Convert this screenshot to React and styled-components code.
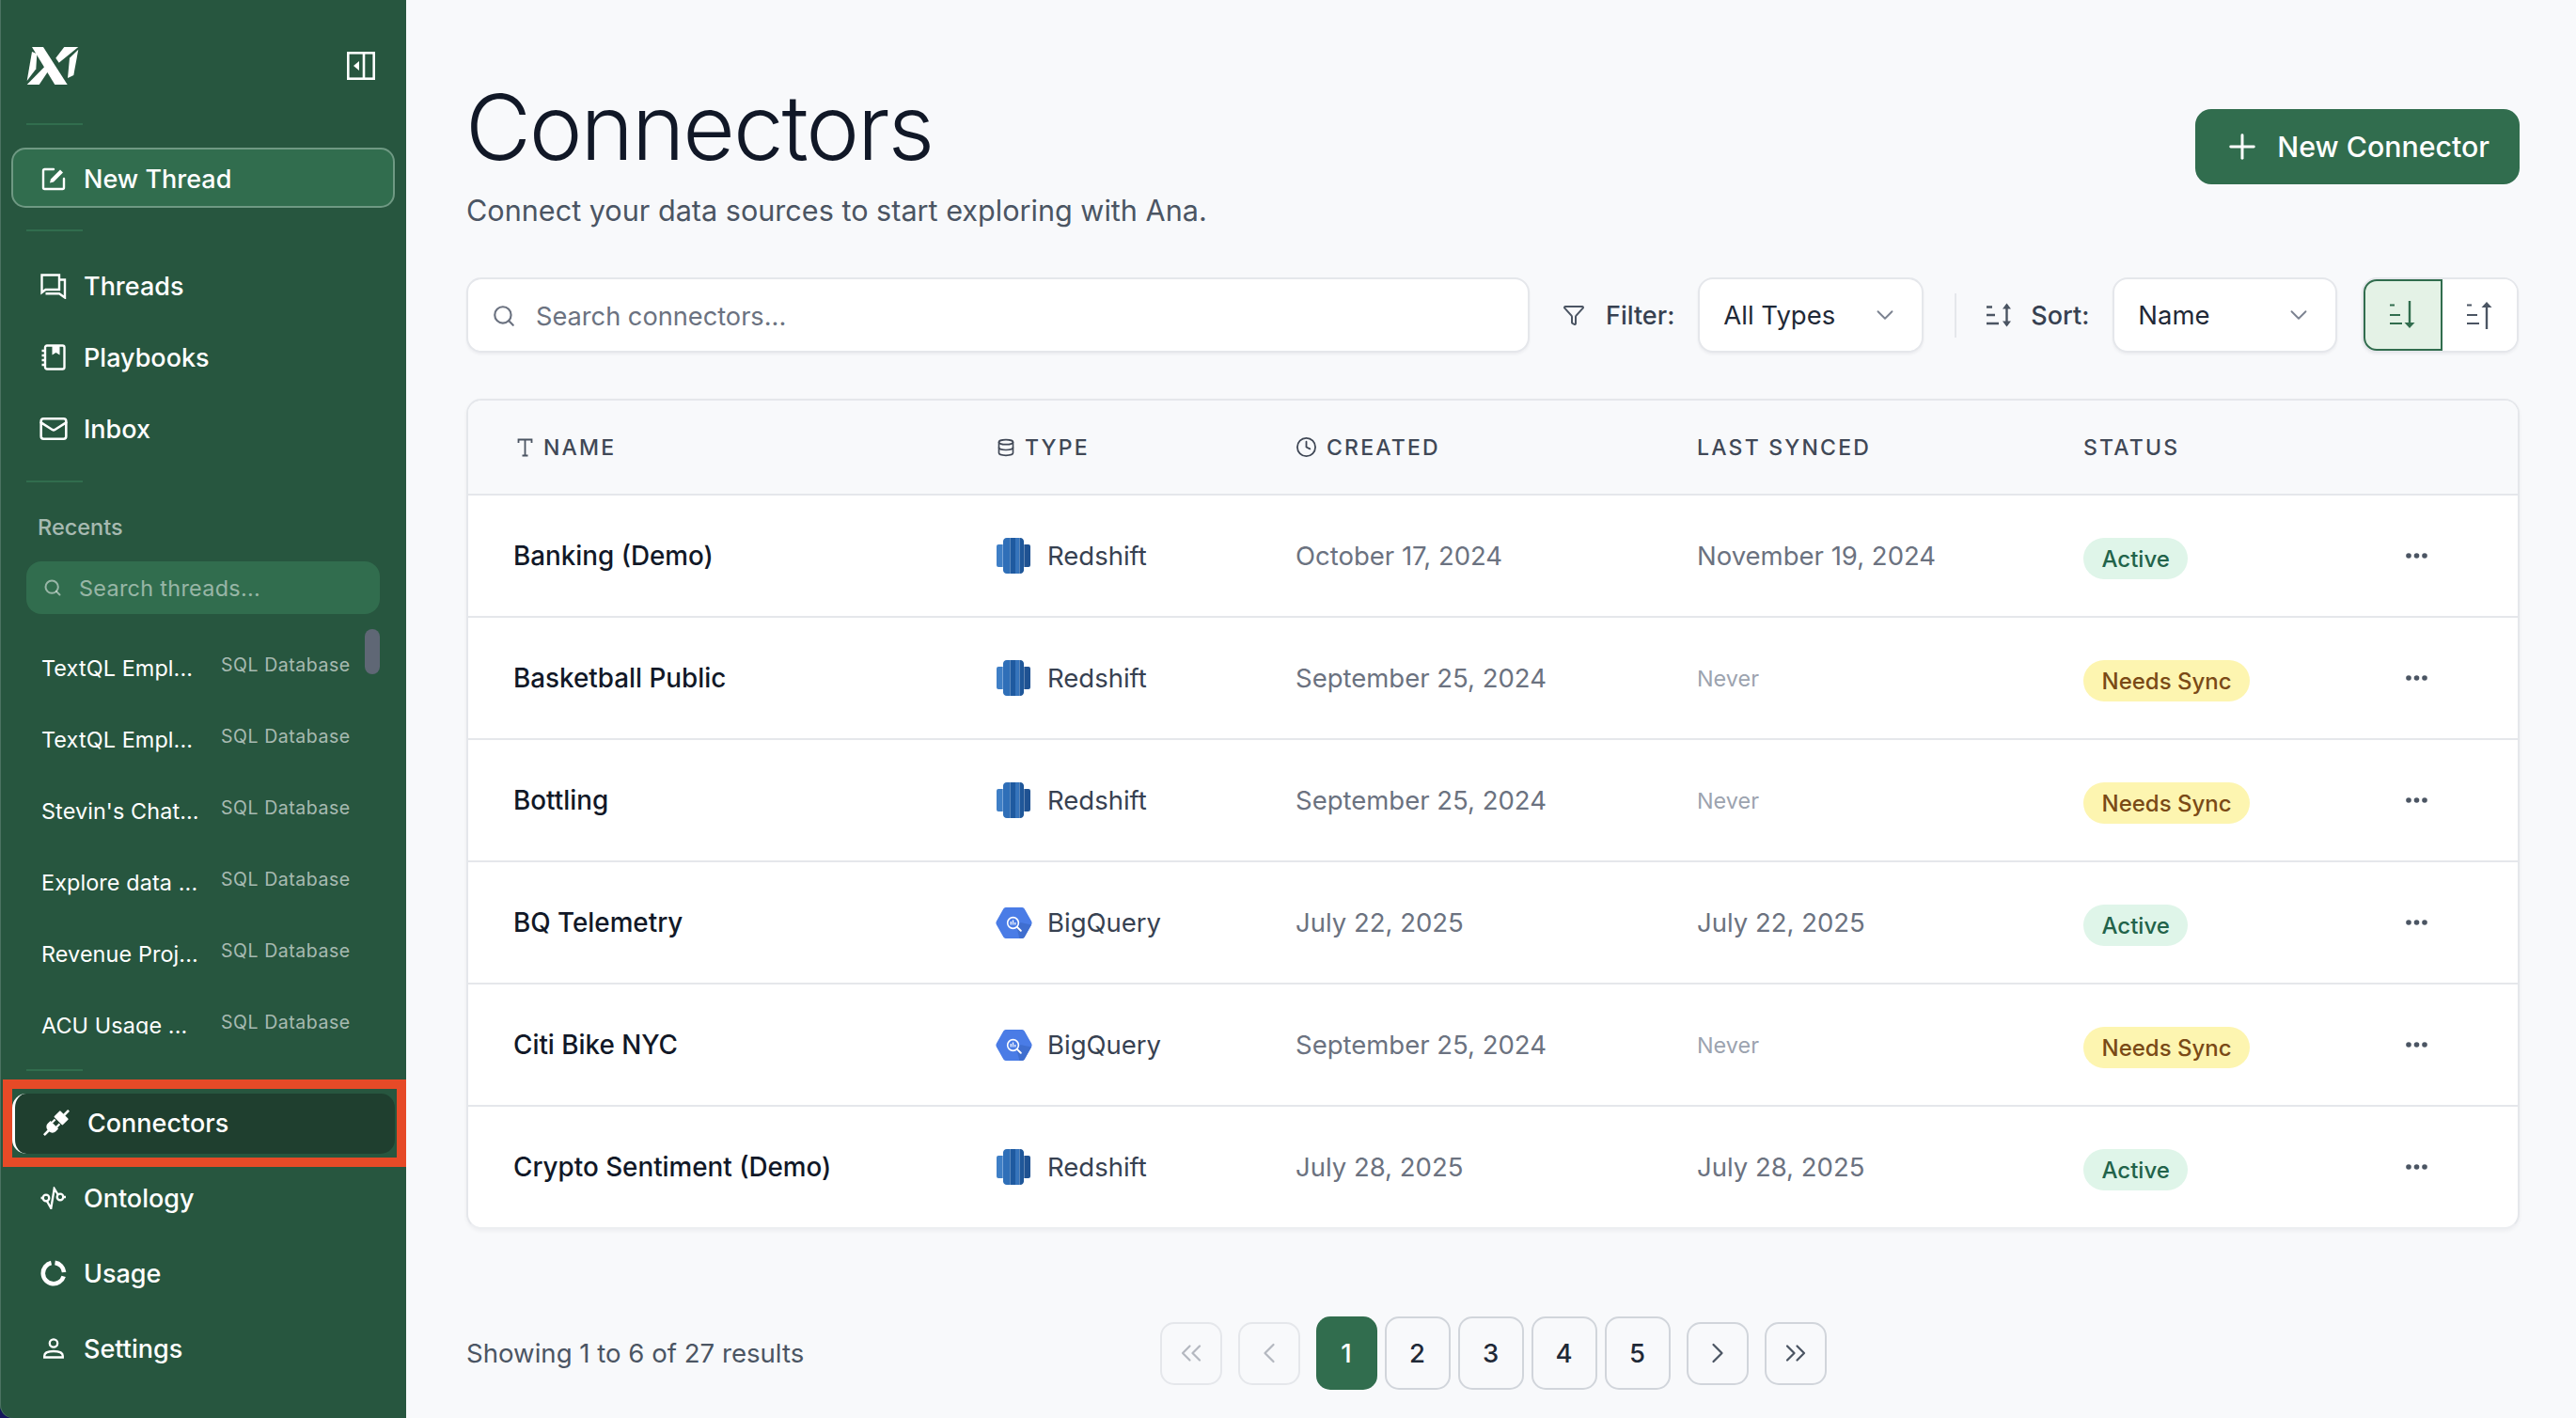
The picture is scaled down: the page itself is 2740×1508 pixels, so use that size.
import React from "react";
import styled, { createGlobalStyle } from "styled-components";
import { Search, Mail, Plus, ChevronDown, ChevronLeft, ChevronRight, ChevronsLeft, ChevronsRight, Funnel, Database, Clock } from "lucide-react";

const Global = createGlobalStyle`
  html, body { margin: 0; padding: 0; background: #14165c; }
  * { box-sizing: border-box; }
  body { font-family: Inter, "Noto Sans", sans-serif; }
`;

const Page = styled.div`
  display: flex;
  width: 2740px;
  height: 1508px;
  overflow: hidden;
  background: #f8f9fb;
`;

/* ---------- Sidebar ---------- */
const SideShell = styled.div`
  flex: 0 0 432px;
  height: 100%;
  background: #14165c;
`;
const Sidebar = styled.aside`
  display: flex;
  flex-direction: column;
  height: 100%;
  padding-top: 49px;
  border-bottom-left-radius: 14px;
  background: #27563f;
  color: #fff;
  box-shadow: inset 1px 0 0 #4c7262;
`;
const Brand = styled.div`
  display: flex;
  align-items: center;
  justify-content: space-between;
  height: 42px;
  padding: 0 33px 0 28px;
`;
const SideRule = styled.div`
  width: 60px;
  height: 2px;
  margin: ${(p) => p.$top}px 0 0 28px;
  flex: none;
  background: #316d4e;
`;
const NewThread = styled.button`
  display: flex;
  align-items: center;
  gap: 19px;
  height: 64px;
  margin: 24px 12px 0;
  padding: 2px 30px 0;
  flex: none;
  border: 2px solid rgba(255, 255, 255, 0.3);
  border-radius: 15px;
  background: #316d4e;
  color: #fff;
  font: 500 27px Inter, sans-serif;
  text-align: left;
`;
const NavGroup = styled.nav`
  display: flex;
  flex-direction: column;
  margin-top: ${(p) => p.$top}px;
`;
const NavItem = styled.div`
  display: flex;
  align-items: center;
  gap: 19px;
  height: ${(p) => p.$h}px;
  padding-left: 43px;
  font-size: 27px;
  font-weight: 500;
`;
const IconBox = styled.span`
  display: flex;
  align-items: center;
  justify-content: center;
  width: 27px;
  height: 27px;
  flex: none;
  & > svg { flex: none; }
`;
const Recents = styled.div`
  margin: 33px 0 0 40px;
  height: 30px;
  line-height: 30px;
  font-size: 23.5px;
  font-weight: 500;
  color: rgba(255, 255, 255, 0.6);
`;
const ThreadSearch = styled.div`
  display: flex;
  align-items: center;
  gap: 18px;
  height: 56px;
  margin: 21px 28px 0;
  padding: 0 18px;
  flex: none;
  border-radius: 16px;
  background: #316d4e;
  color: rgba(255, 255, 255, 0.5);
  font-size: 23.4px;
  letter-spacing: 0.3px;
`;
const ThreadList = styled.div`
  position: relative;
  height: 431px;
  margin-top: 16px;
  padding-top: 3px;
  flex: none;
  overflow: hidden;
`;
const Thumb = styled.div`
  position: absolute;
  top: 0;
  right: 28px;
  width: 16px;
  height: 48px;
  border-radius: 8px;
  background: #5f6775;
`;
const ThreadRow = styled.div`
  display: grid;
  grid-template-columns: 172px auto;
  column-gap: 19px;
  align-items: center;
  height: 76px;
  padding-left: 44px;
`;
const ThreadName = styled.span`
  white-space: nowrap;
  font-size: 23.4px;
  letter-spacing: 0.1px;
`;
const ThreadType = styled.span`
  padding-bottom: 7px;
  font-size: 19.5px;
  letter-spacing: 0.55px;
  color: rgba(255, 255, 255, 0.6);
`;
const ActiveWrap = styled.div`
  position: relative;
  height: 64px;
  margin: 24px 12px 0 13px;
  flex: none;
`;
const ActiveItem = styled.div`
  display: flex;
  align-items: center;
  gap: 20px;
  height: 100%;
  padding: 0 0 2px 30px;
  border-left: 3px solid #fff;
  border-radius: 15px;
  background: #1f3f2f;
  font-size: 27px;
  font-weight: 500;
`;
const Callout = styled.div`
  position: absolute;
  top: -15px;
  left: -10px;
  right: -12px;
  bottom: -14px;
  border: 10px solid #e64a27;
  pointer-events: none;
`;

/* ---------- Main ---------- */
const Main = styled.main`
  flex: 1;
  display: flex;
  flex-direction: column;
  min-width: 0;
  padding: 80px 60px 0 64px;
`;
const Header = styled.header`
  display: flex;
  justify-content: space-between;
  align-items: flex-start;
`;
const Title = styled.h1`
  margin: 0 0 0 -1px;
  height: 110px;
  line-height: 110px;
  font-size: 96px;
  font-weight: 300;
  letter-spacing: -2.1px;
  color: #111827;
`;
const Subtitle = styled.p`
  margin: 16px 0 0;
  line-height: 36px;
  font-size: 30.6px;
  color: #4b5563;
`;
const PrimaryButton = styled.button`
  display: flex;
  align-items: center;
  gap: 16px;
  height: 80px;
  margin-top: 36px;
  padding: 0 32px 0 29px;
  border: 0;
  border-radius: 17px;
  background: #316d4e;
  color: #fff;
  font: 500 30.3px Inter, sans-serif;
`;
const Toolbar = styled.div`
  display: flex;
  align-items: center;
  height: 80px;
  margin-top: 53px;
`;
const SearchField = styled.label`
  display: flex;
  align-items: center;
  gap: 19px;
  width: 1131px;
  height: 80px;
  padding: 2px 25px 0;
  flex: none;
  border: 2px solid #e5e7eb;
  border-radius: 16px;
  background: #fff;
  box-shadow: 0 2px 3px rgba(17, 24, 39, 0.05);
  color: #6b7280;
`;
const SearchInput = styled.input`
  flex: 1;
  min-width: 0;
  border: 0;
  outline: 0;
  background: transparent;
  font: 400 27.2px Inter, sans-serif;
  &::placeholder { color: #6b7280; opacity: 1; }
`;
const ToolLabel = styled.span`
  display: flex;
  align-items: center;
  gap: ${(p) => p.$gap}px;
  margin-left: ${(p) => p.$left}px;
  font-size: 27px;
  font-weight: 500;
  color: #374151;
  & > svg { color: #4b5563; flex: none; }
`;
const Select = styled.div`
  display: flex;
  align-items: center;
  justify-content: space-between;
  width: ${(p) => p.$w}px;
  height: 80px;
  margin-left: 25px;
  padding: 0 24px 0 25px;
  flex: none;
  border: 2px solid #e5e7eb;
  border-radius: 16px;
  background: #fff;
  box-shadow: 0 2px 3px rgba(17, 24, 39, 0.05);
  font-size: 27.5px;
  color: #1f2937;
  & > svg { color: #7b8290; }
`;
const VRule = styled.div`
  width: 2px;
  height: 47px;
  margin-left: 33px;
  flex: none;
  background: #e5e7eb;
`;
const SortToggle = styled.div`
  display: flex;
  width: 167px;
  height: 80px;
  margin-left: 26px;
  flex: none;
  border: 2px solid #e5e7eb;
  border-radius: 16px;
  background: #fff;
  box-shadow: 0 2px 3px rgba(17, 24, 39, 0.05);
`;
const SortButton = styled.div`
  display: flex;
  align-items: center;
  justify-content: center;
  flex: ${(p) => (p.$on ? "0 0 84px" : "1")};
  border: ${(p) => (p.$on ? "2px solid #316d4e" : "0")};
  border-radius: ${(p) => (p.$on ? "14px 0 0 14px" : "0 14px 14px 0")};
  background: ${(p) => (p.$on ? "#e4f2e6" : "#fff")};
  color: ${(p) => (p.$on ? "#316d4e" : "#4b5563")};
`;
const columns = "514px 318px 427px 411px 300px 1fr";
const Table = styled.section`
  margin-top: 49px;
  border: 2px solid #e5e7eb;
  border-bottom-color: #eceef1;
  border-radius: 16px;
  overflow: hidden;
  background: #fff;
  box-shadow: 0 2px 4px rgba(17, 24, 39, 0.05);
`;
const HeadRow = styled.div`
  display: grid;
  grid-template-columns: ${columns};
  align-items: center;
  height: 101px;
  border-bottom: 2px solid #e5e7eb;
  background: #f8f9fb;
`;
const HeadCell = styled.div`
  display: flex;
  align-items: center;
  gap: ${(p) => p.$gap ?? 10}px;
  padding-left: ${(p) => p.$pad ?? 48}px;
  font-size: 23px;
  font-weight: 500;
  letter-spacing: 2.2px;
  color: #404856;
`;
const Row = styled.div`
  display: grid;
  grid-template-columns: ${columns};
  align-items: center;
  height: 130px;
  border-bottom: 2px solid #e5e7eb;
  &:last-child { height: 128px; border-bottom: 0; }
`;
const Cell = styled.div`
  display: flex;
  align-items: center;
  gap: 18px;
  padding-left: 48px;
  font-size: ${(p) => p.$size || 27.5}px;
  color: ${(p) => p.$color || "#6b7280"};
  font-weight: ${(p) => p.$weight || 400};
`;
const LogoSlot = styled.span`
  display: flex;
  align-items: center;
  justify-content: center;
  width: 36px;
  height: 38px;
  flex: none;
  & > svg { flex: none; }
`;
const Never = styled.span`
  font-size: 23.4px;
  color: #9ca3af;
`;
const Badge = styled.span`
  display: inline-flex;
  align-items: center;
  height: 44px;
  margin-top: 6px;
  padding: 0 19.500px;
  border-radius: 22px;
  font-size: 24px;
  font-weight: 500;
  background: ${(p) => (p.$warn ? "#fdf5b0" : "#dff5e9")};
  color: ${(p) => (p.$warn ? "#7a4a16" : "#22634a")};
`;
const Dots = styled.div`
  display: flex;
  align-items: center;
  padding-left: 91px;
  color: #4b5563;
`;
const Footer = styled.div`
  display: grid;
  grid-template-columns: 1fr auto 1fr;
  align-items: center;
  height: 78px;
  margin-top: 93px;
`;
const Showing = styled.div`
  font-size: 27.6px;
  color: #4b5563;
`;
const Pager = styled.div`
  display: flex;
  align-items: center;
  gap: 17px;
`;
const Pages = styled.div`
  display: flex;
  align-items: center;
  gap: 8px;
`;
const NavBtn = styled.div`
  display: flex;
  align-items: center;
  justify-content: center;
  width: 66px;
  height: 67px;
  border: 2px solid ${(p) => (p.$off ? "#e5e7eb" : "#d1d5db")};
  border-radius: 15px;
  color: ${(p) => (p.$off ? "#b4b8c0" : "#4b5563")};
`;
const PageBtn = styled.div`
  display: flex;
  align-items: center;
  justify-content: center;
  width: ${(p) => (p.$on ? 65 : 70)}px;
  height: 78px;
  border: ${(p) => (p.$on ? "0" : "2px solid #d1d5db")};
  border-radius: 15px;
  background: ${(p) => (p.$on ? "#316d4e" : "transparent")};
  color: ${(p) => (p.$on ? "#fff" : "#1f2937")};
  font-size: 27.5px;
  font-weight: 500;
`;

/* ---------- Drawings ---------- */
const Logo = () => (
  <svg width="57" height="42" viewBox="0 0 57 42" fill="#fff">
    <polygon points="6,1 18,1 43.7,41 30.3,41" />
    <polygon points="55.3,1 40.3,1 31.3,12.7 34.7,17.7" />
    <polygon points="55.3,3.7 50.3,31 44,34 46,12.7" />
    <polygon points="6,6 11.3,8.3 10.3,24.3 0.7,37" />
    <polygon points="0.7,41 13.7,41 23.7,26 20.3,21" />
  </svg>
);
const Collapse = () => (
  <svg width="30" height="30" viewBox="0 0 30 30" fill="none" stroke="#fff" strokeWidth="2.6">
    <rect x="1.3" y="1.3" width="27.4" height="27.4" />
    <line x1="18" y1="1" x2="18" y2="29" />
    <polygon points="13,10 13,20 7,15" fill="#fff" stroke="none" />
  </svg>
);
const Pen = () => (
  <svg width="26" height="26" viewBox="0 0 26 26" fill="none" stroke="#fff" strokeWidth="2.4" strokeLinecap="round">
    <path d="M13 3H3.5a1.5 1.5 0 0 0-1.5 1.5v18A1.5 1.5 0 0 0 3.5 24h19a1.5 1.5 0 0 0 1.5-1.5V13" />
    <path d="M9 17.5l1-4L20 3.5l3 3L13 16.5z" fill="#fff" stroke="none" />
  </svg>
);
const Threads = () => (
  <svg width="28" height="27" viewBox="0 0 28 27" fill="none" stroke="#fff" strokeWidth="2.4">
    <path d="M1.5 1.5H20V17H5.500L1.500 20z" />
    <path d="M5.500 21.300H20L26 25.500V6.500H21" />
  </svg>
);
const Playbook = () => (
  <svg width="26" height="28" viewBox="0 0 26 28" fill="none" stroke="#fff" strokeWidth="2.4">
    <rect x="4" y="1.5" width="20.5" height="25" rx="2" />
    <path d="M11.500 1.500h8v10l-4-2.500-4 2.500z" fill="#fff" stroke="none" />
    <path d="M0.500 7h4M0.500 12h4M0.500 17h4M0.500 22h4" />
  </svg>
);
const PlugIcon = () => (
  <svg width="30" height="30" viewBox="0 0 30 30" fill="#fff" overflow="visible">
    <g transform="rotate(45 15 15)">
      <rect x="13.700" y="-3.500" width="2.600" height="7.500" />
      <rect x="8.500" y="3" width="13" height="9.500" rx="1" />
      <rect x="10.500" y="13.500" width="2.200" height="5" />
      <rect x="17.300" y="13.500" width="2.200" height="5" />
      <path d="M9 18h12v4a5 5 0 0 1-5 5h-2a5 5 0 0 1-5-5z" />
      <rect x="13.700" y="26" width="2.600" height="7.500" />
    </g>
  </svg>
);
const Ontology = () => (
  <svg width="28" height="24" viewBox="0 0 28 24" fill="none" stroke="#fff" strokeWidth="2.3">
    <circle cx="6" cy="12" r="3.300" />
    <circle cx="21" cy="11" r="3.300" />
    <path d="M0.500 12H2.700M24.300 11H27M7 15.500L11.300 23L14.700 2L18.700 8.500" />
  </svg>
);
const Usage = () => (
  <svg width="28" height="28" viewBox="0 0 28 28" fill="none" stroke="#fff" strokeWidth="4.6">
    <path d="M15.500 2.900A11.200 11.200 0 0 1 25.100 13M24.700 17.300A11.200 11.200 0 1 1 11.500 3.100" />
  </svg>
);
const Person = () => (
  <svg width="22" height="22" viewBox="0 0 22 22" fill="none" stroke="#fff" strokeWidth="2.300">
    <circle cx="11" cy="5.500" r="4.200" />
    <path d="M1.200 20.500V19c0-3 3-5 9.800-5s9.800 2 9.800 5v1.500z" />
  </svg>
);
const SortBoth = () => (
  <svg width="29" height="28" viewBox="0 0 29 28" fill="none" stroke="currentColor" strokeWidth="2.400">
    <path d="M0 5.500h6M0 14h9M0 23h13M21.500 3v22" />
    <path d="M17 7.500l4.500-6 4.500 6zM17 20.500l4.500 6 4.500-6z" fill="currentColor" stroke="none" />
  </svg>
);
const SortArrow = ({ down }) => (
  <svg width="28" height="30" viewBox="0 0 28 30" fill="none" stroke="currentColor" strokeWidth="2.400">
    <path d="M0 4.500h5M0 15h11M0 24h13" strokeWidth="2.200" />
    <path d={down ? "M21 0v26" : "M21 4v26"} />
    <path d={down ? "M15.500 23h11L21 29z" : "M15.500 7h11L21 1z"} fill="currentColor" stroke="none" />
  </svg>
);
const TypeT = () => (
  <svg width="17" height="20" viewBox="0 0 17 20" fill="none" stroke="#4b5563" strokeWidth="1.800">
    <path d="M1.500 5V1.500h14V5M8.500 1.500V18M5.500 18.500h6" />
  </svg>
);
const Redshift = () => (
  <svg width="36" height="38" viewBox="0 0 36 38">
    <path d="M6.700 7H2a2 2 0 0 0-2 2v20a2 2 0 0 0 2 2h4.700z" fill="#3f7fc6" />
    <path d="M29.300 7H34a2 2 0 0 1 2 2v20a2 2 0 0 1-2 2h-4.700z" fill="#1f5292" />
    <path d="M7 3.500A4 4 0 0 1 11 0h3.500v38H11a4 4 0 0 1-4-3.500z" fill="#2f6fb8" />
    <rect x="14.500" y="0" width="5.500" height="38" fill="#1f5aa0" />
    <rect x="20" y="0" width="4.500" height="38" fill="#3674bb" />
    <path d="M24.500 0H25a4 4 0 0 1 4 3.500v31a4 4 0 0 1-4 3.500h-0.500z" fill="#1f5799" />
  </svg>
);
const BigQuery = () => (
  <svg width="39" height="35" viewBox="0 0 40 35">
    <path d="M1 15.500L8.500 2A3 3 0 0 1 11 .500h18A3 3 0 0 1 31.500 2L39 15.500a4 4 0 0 1 0 4L31.500 33a3 3 0 0 1-2.500 1.500H11A3 3 0 0 1 8.500 33L1 19.500a4 4 0 0 1 0-4z" fill="#4a7ce6" />
    <path d="M23 22l4-5 12 2.500L31.500 33a3 3 0 0 1-2.500 1.500H26z" fill="#3f6ecf" />
    <circle cx="19" cy="17.500" r="6" fill="none" stroke="#fff" strokeWidth="1.600" />
    <path d="M23.500 22l4 4" stroke="#fff" strokeWidth="2" strokeLinecap="round" />
    <path d="M16.700 16v3.500M19 14.500v5M21.300 17v2.500" stroke="#fff" strokeWidth="1.300" />
  </svg>
);
const More = () => (
  <svg width="23" height="8" viewBox="0 0 23 8" fill="currentColor">
    <circle cx="3" cy="4" r="2.800" />
    <circle cx="11.500" cy="4" r="2.800" />
    <circle cx="20" cy="4" r="2.800" />
  </svg>
);

/* ---------- Data ---------- */
const threads = ["TextQL Empl...", "TextQL Empl...", "Stevin's Chat...", "Explore data ...", "Revenue Proj...", "ACU Usage ..."];
const rows = [
  ["Banking (Demo)", "Redshift", "October 17, 2024", "November 19, 2024", "Active"],
  ["Basketball Public", "Redshift", "September 25, 2024", "Never", "Needs Sync"],
  ["Bottling", "Redshift", "September 25, 2024", "Never", "Needs Sync"],
  ["BQ Telemetry", "BigQuery", "July 22, 2025", "July 22, 2025", "Active"],
  ["Citi Bike NYC", "BigQuery", "September 25, 2024", "Never", "Needs Sync"],
  ["Crypto Sentiment (Demo)", "Redshift", "July 28, 2025", "July 28, 2025", "Active"],
];

export default function App() {
  return (
    <>
      <Global />
      <Page>
        <SideShell>
          <Sidebar>
            <Brand>
              <Logo />
              <Collapse />
            </Brand>
            <SideRule $top={40} />
            <NewThread>
              <Pen />
              New Thread
            </NewThread>
            <SideRule $top={23} />
            <NavGroup $top={20}>
              <NavItem $h={76}><IconBox><Threads /></IconBox>Threads</NavItem>
              <NavItem $h={76}><IconBox><Playbook /></IconBox>Playbooks</NavItem>
              <NavItem $h={76}><IconBox><Mail size={32} strokeWidth={1.9} /></IconBox>Inbox</NavItem>
            </NavGroup>
            <SideRule $top={17} />
            <Recents>Recents</Recents>
            <ThreadSearch>
              <Search size={20} strokeWidth={2.4} />
              Search threads...
            </ThreadSearch>
            <ThreadList>
              <Thumb />
              {threads.map((t, i) => (
                <ThreadRow key={i}>
                  <ThreadName>{t}</ThreadName>
                  <ThreadType>SQL Database</ThreadType>
                </ThreadRow>
              ))}
            </ThreadList>
            <SideRule $top={37} />
            <ActiveWrap>
              <ActiveItem><IconBox><PlugIcon /></IconBox>Connectors</ActiveItem>
              <Callout />
            </ActiveWrap>
            <NavGroup $top={7}>
              <NavItem $h={80}><IconBox><Ontology /></IconBox>Ontology</NavItem>
              <NavItem $h={80}><IconBox><Usage /></IconBox>Usage</NavItem>
              <NavItem $h={80}><IconBox><Person /></IconBox>Settings</NavItem>
            </NavGroup>
          </Sidebar>
        </SideShell>
        <Main>
          <Header>
            <div>
              <Title>Connectors</Title>
              <Subtitle>Connect your data sources to start exploring with Ana.</Subtitle>
            </div>
            <PrimaryButton>
              <Plus size={42} strokeWidth={1.7} />
              New Connector
            </PrimaryButton>
          </Header>
          <Toolbar>
            <SearchField>
              <Search size={26} strokeWidth={2} />
              <SearchInput placeholder="Search connectors..." />
            </SearchField>
            <ToolLabel $left={35} $gap={22}><Funnel size={24} strokeWidth={2} />Filter:</ToolLabel>
            <Select $w={240}>All Types<ChevronDown size={30} strokeWidth={1.5} /></Select>
            <VRule />
            <ToolLabel $left={32} $gap={18}><SortBoth />Sort:</ToolLabel>
            <Select $w={239}>Name<ChevronDown size={30} strokeWidth={1.5} /></Select>
            <SortToggle>
              <SortButton $on><SortArrow down /></SortButton>
              <SortButton><SortArrow /></SortButton>
            </SortToggle>
          </Toolbar>
          <Table>
            <HeadRow>
              <HeadCell $pad={52} $gap={11}><TypeT />NAME</HeadCell>
              <HeadCell><Database size={20} strokeWidth={2} />TYPE</HeadCell>
              <HeadCell><Clock size={23} strokeWidth={1.9} />CREATED</HeadCell>
              <HeadCell>LAST SYNCED</HeadCell>
              <HeadCell>STATUS</HeadCell>
              <div />
            </HeadRow>
            {rows.map(([name, type, created, synced, status]) => (
              <Row key={name}>
                <Cell $color="#111827" $weight={500} $size={27.8}>{name}</Cell>
                <Cell $color="#374151">
                  <LogoSlot>{type === "Redshift" ? <Redshift /> : <BigQuery />}</LogoSlot>
                  {type}
                </Cell>
                <Cell>{created}</Cell>
                <Cell>{synced === "Never" ? <Never>Never</Never> : synced}</Cell>
                <Cell><Badge $warn={status !== "Active"}>{status}</Badge></Cell>
                <Dots><More /></Dots>
              </Row>
            ))}
          </Table>
          <Footer>
            <Showing>Showing 1 to 6 of 27 results</Showing>
            <Pager>
              <NavBtn $off><ChevronsLeft size={36} strokeWidth={1.5} /></NavBtn>
              <NavBtn $off><ChevronLeft size={36} strokeWidth={1.5} /></NavBtn>
              <Pages>
                <PageBtn $on>1</PageBtn>
                <PageBtn>2</PageBtn>
                <PageBtn>3</PageBtn>
                <PageBtn>4</PageBtn>
                <PageBtn>5</PageBtn>
              </Pages>
              <NavBtn><ChevronRight size={36} strokeWidth={1.5} /></NavBtn>
              <NavBtn><ChevronsRight size={36} strokeWidth={1.5} /></NavBtn>
            </Pager>
            <div />
          </Footer>
        </Main>
      </Page>
    </>
  );
}
